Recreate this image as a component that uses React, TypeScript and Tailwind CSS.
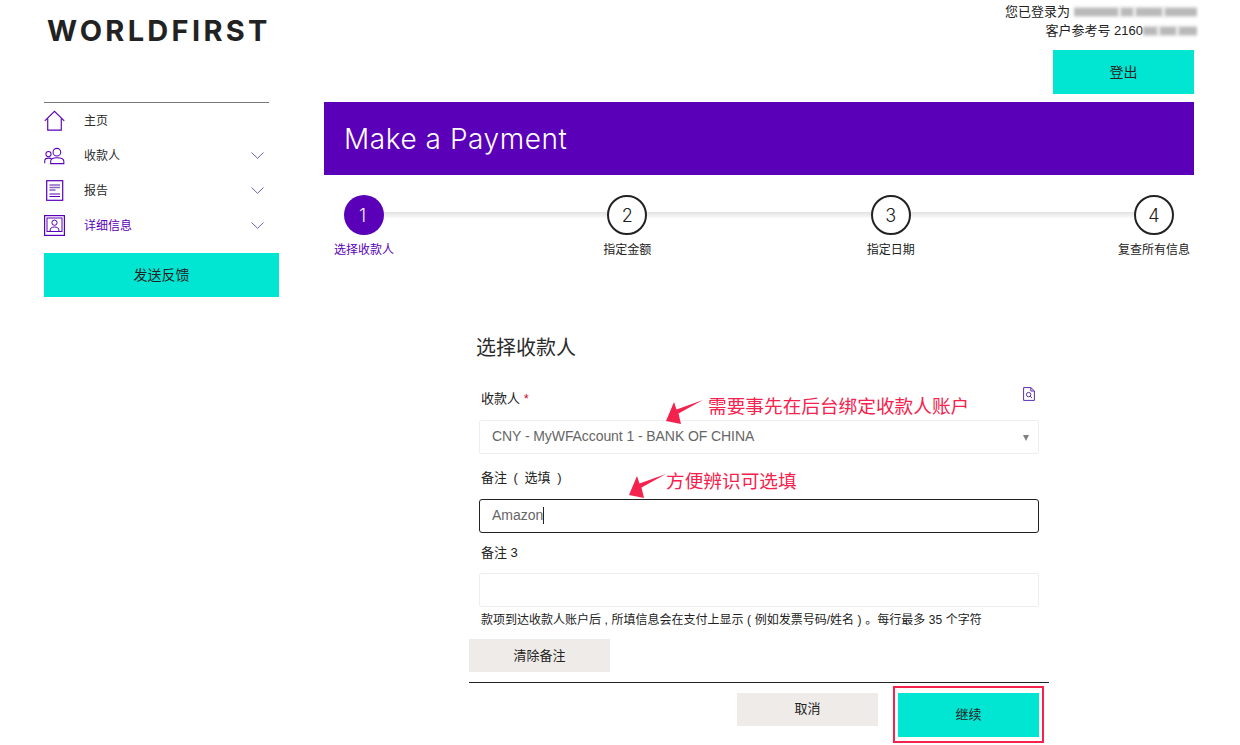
const font = { fontFamily: '"Liberation Sans", "Noto Sans CJK SC", sans-serif' };

function HomeIcon() {
  return (
    <svg width="22" height="22" viewBox="0 0 22 22" fill="none" stroke="#5a00b8" strokeWidth="1.2">
      <path d="M0.8 10.8 L11 0.9 L21.2 10.8" />
      <path d="M3.9 8 V20.6 H18.1 V8" />
    </svg>
  );
}

function PeopleIcon() {
  return (
    <svg width="22" height="18" viewBox="0 0 22 18" fill="none" stroke="#5a00b8" strokeWidth="1.1">
      <circle cx="13.5" cy="5" r="4" />
      <circle cx="4.7" cy="7" r="2.7" />
      <path d="M7 17 V14.5 C7 12 9.5 10.8 13.5 10.8 C17.5 10.8 20.8 12 20.8 14.5 V17 Z" />
      <path d="M0.8 16.5 V14 C0.8 12 2.6 11.2 5 11.2 C6 11.2 7 11.4 8 11.8" />
    </svg>
  );
}

function ReportIcon() {
  return (
    <svg width="18" height="21" viewBox="0 0 18 21" fill="none">
      <rect x="0.7" y="0.7" width="16" height="19.6" stroke="#5a00b8" strokeWidth="1.2" />
      <path d="M3.5 5 H14 M3.5 7.5 H14 M3.5 10 H9.5" stroke="#8a63c9" strokeWidth="1.4" />
      <path d="M3.5 14 H14 M3.5 16.5 H14" stroke="#5a00b8" strokeWidth="1" />
    </svg>
  );
}

function ProfileIcon() {
  return (
    <svg width="21" height="21" viewBox="0 0 21 21" fill="none" stroke="#5a00b8">
      <rect x="0.6" y="0.6" width="19.8" height="19.8" strokeWidth="1.2" />
      <rect x="3" y="3" width="15" height="13.5" strokeWidth="1" />
      <circle cx="10.5" cy="7.7" r="2.6" strokeWidth="1" />
      <path d="M6 16 C6 12.8 8 12 10.5 12 C13 12 15 12.8 15 16" strokeWidth="1" />
    </svg>
  );
}

function DocSearchIcon() {
  return (
    <svg width="12" height="14" viewBox="0 0 12 14" fill="none" stroke="#5a2fb0" strokeWidth="1">
      <path d="M0.6 0.6 H7.8 L11.4 4 V13.4 H0.6 Z" />
      <path d="M7.8 0.6 V4 H11.4" />
      <circle cx="5.6" cy="7.6" r="2.2" />
      <path d="M7.2 9.2 L9 11" />
    </svg>
  );
}

function Chevron() {
  return (
    <svg className="ml-auto mr-[5px]" width="13" height="7" viewBox="0 0 13 7" fill="none" stroke="#5f4fb0" strokeWidth="0.9">
      <path d="M0.5 0.5 L6.5 6.3 L12.5 0.5" />
    </svg>
  );
}

function Arrow({ className }: { className: string }) {
  return (
    <svg className={className} width="38" height="24" viewBox="0 0 38 24">
      <path d="M0 21 L8 2 L10.5 9.5 L37 0 L12.5 13.5 L15 24 Z" fill="#f5224e" />
    </svg>
  );
}

function Smudge({ parts, bg }: { parts: number[]; bg: string }) {
  // the reference has these values blurred out
  return (
    <span className={bg + ' flex items-center gap-[3px] h-[12px] blur-[1.5px]'}>
      {parts.map((w, i) => (
        <span key={i} className="h-[8px] bg-[#b9b9b9]" style={{ width: w }} />
      ))}
    </span>
  );
}

function NavItem({ icon, label, active, expandable }: { icon: React.ReactNode; label: string; active?: boolean; expandable?: boolean }) {
  return (
    <div className="flex items-center h-[35px]">
      <div className="w-[40px] flex items-center justify-center pr-[19px] shrink-0">{icon}</div>
      <span className={active ? 'text-[12px] text-[#5a00b8]' : 'text-[12px] text-[#2b2b2b]'}>{label}</span>
      {expandable && <Chevron />}
    </div>
  );
}

function Step({ n, label, active }: { n: number; label: string; active?: boolean }) {
  return (
    <div className="relative w-[40px] shrink-0">
      <div
        className={
          active
            ? 'w-[40px] h-[40px] pr-[3px] rounded-full bg-[#5a00b8] text-[#f2ecfa] flex items-center justify-center text-[18px] font-light'
            : 'w-[40px] h-[40px] rounded-full border-2 border-[#222222] bg-white text-[#222222] flex items-center justify-center text-[18px] font-light'
        }
        style={{ fontFamily: '"Inter", sans-serif' }}
      >
        {n}
      </div>
      <div
        className={
          (active ? 'text-[#5a00b8] ' : 'text-[#222222] ') +
          'absolute top-[47px] left-1/2 -translate-x-1/2 whitespace-nowrap text-[12px] leading-[16px]'
        }
      >
        {label}
      </div>
    </div>
  );
}

export default function App() {
  return (
    <div className="relative w-[1240px] h-[745px] overflow-hidden bg-white flex" style={font}>
      {/* left column */}
      <aside className="w-[324px] shrink-0 pl-[44px]">
        <div
          className="h-[103px] pt-[14px] pl-[3px] text-[29px] leading-[33px] font-bold tracking-[3.3px] text-[#222222] border-b border-[#777777] w-[225px] whitespace-nowrap"
          style={{ fontFamily: '"Inter", sans-serif' }}
        >
          WORLDFIRST
        </div>
        <nav className="w-[225px]">
          <NavItem icon={<HomeIcon />} label="主页" />
          <NavItem icon={<PeopleIcon />} label="收款人" expandable />
          <NavItem icon={<ReportIcon />} label="报告" expandable />
          <NavItem icon={<ProfileIcon />} label="详细信息" active expandable />
        </nav>
        <button className="mt-[10px] w-[235px] h-[44px] bg-[#00e6d2] text-[14px] text-[#222222]">发送反馈</button>
      </aside>

      {/* main column */}
      <main className="w-[870px] shrink-0">
        <div className="h-[102px] flex flex-col items-end">
          <div className="h-[50px] pt-[2px] -mr-[3px] text-right text-[13px] leading-[19px] text-[#222222]">
            <div className="flex justify-end items-center">
              您已登录为
              <span className="ml-[4px]">
                <Smudge parts={[44, 12, 26, 32]} bg="bg-[#f0f0f0]" />
              </span>
            </div>
            <div className="flex justify-end items-center">
              客户参考号 2160
              <Smudge parts={[14, 16, 18]} bg="bg-[#efefef]" />
            </div>
          </div>
          <button className="w-[141px] h-[44px] bg-[#00e6d2] text-[14px] text-[#222222]">登出</button>
        </div>

        <div
          className="h-[73px] bg-[#5a00b8] text-white pl-[20px] flex items-center text-[28px] tracking-[0.55px]"
          style={{ fontFamily: '"Inter", sans-serif', fontWeight: 300 }}
        >
          Make a Payment
        </div>

        {/* stepper */}
        <div className="relative mt-[20px] ml-[20px] w-[830px] h-[40px] flex justify-between items-center">
          <div className="absolute left-[20px] right-[20px] top-[17px] h-[6px] bg-linear-to-b from-[#e2e2e2] to-[#fafafa]" />
          <Step n={1} label="选择收款人" active />
          <Step n={2} label="指定金额" />
          <Step n={3} label="指定日期" />
          <Step n={4} label="复查所有信息" />
        </div>

        {/* form */}
        <div className="ml-[145px] w-[580px] mt-[98px] text-[#222222]">
          <h2 className="ml-[7px] text-[20px] leading-[30px] text-[#2b2b2b]">选择收款人</h2>

          <div className="mt-[22px] flex items-start justify-between pl-[12px] pr-[14px] h-[27px]">
            <label className="self-center text-[13px]">
              收款人 <span className="text-[#d0103a]">*</span>
            </label>
            <span className="mt-[2px]">
              <DocSearchIcon />
            </span>
          </div>
          <div className="relative mx-[10px] mt-[8px] h-[34px] pb-[2px] border border-[#eeeeee] rounded-[2px] flex items-center pl-[12px] text-[14px] tracking-[-0.08px] text-[#666666]">
            CNY - MyWFAccount 1 - BANK OF CHINA
            <span className="absolute right-[9px] top-[14px] w-0 h-0 border-l-[3.5px] border-r-[3.5px] border-t-[6px] border-l-transparent border-r-transparent border-t-[#808080]" />
          </div>

          <label className="block mt-[14px] ml-[12px] h-[31px] text-[13px] leading-[20px] [word-spacing:3px]">备注 ( 选填 )</label>
          <div className="mx-[10px] h-[34px] pb-[2px] border border-[#222222] rounded-[3px] flex items-center pl-[12px] text-[14px] text-[#666666]">
            Amazon
            <span className="w-px h-[17px] bg-[#222222]" />
          </div>

          <label className="block mt-[10px] ml-[12px] h-[30px] text-[13px] leading-[20px]">备注 3</label>
          <div className="mx-[10px] h-[34px] border border-[#eeeeee] rounded-[2px]" />
          <p className="mt-[5px] ml-[12px] text-[12px] leading-[16px] whitespace-nowrap [word-spacing:0.25px]">
            款项到达收款人账户后 , 所填信息会在支付上显示 ( 例如发票号码/姓名 ) 。每行最多 35 个字符
          </p>

          <button className="block mt-[11px] w-[141px] h-[33px] bg-[#eeebe8] text-[13px] text-[#222222]">清除备注</button>
          <div className="mt-[10px] border-t border-[#222222]" />

          <div className="mt-[10px] flex justify-end items-start gap-[20px] pr-[10px]">
            <button className="w-[141px] h-[33px] pb-[2px] bg-[#eeebe8] text-[13px] text-[#222222]">取消</button>
            <button className="w-[141px] h-[44px] bg-[#00e6d2] text-[13px] text-[#222222]">继续</button>
          </div>
        </div>
      </main>

      {/* annotations on top of the screenshot */}
      <Arrow className="absolute left-[666px] top-[400px]" />
      <span className="absolute left-[708px] top-[395px] text-[18.67px] leading-[24px] text-[#f5224e] whitespace-nowrap">需要事先在后台绑定收款人账户</span>
      <Arrow className="absolute left-[629px] top-[474px]" />
      <span className="absolute left-[666px] top-[470px] text-[18.67px] leading-[24px] text-[#f5224e] whitespace-nowrap">方便辨识可选填</span>
      <div className="absolute left-[893px] top-[686px] w-[151px] h-[57px] border-2 border-[#f5224e]" />
    </div>
  );
}
